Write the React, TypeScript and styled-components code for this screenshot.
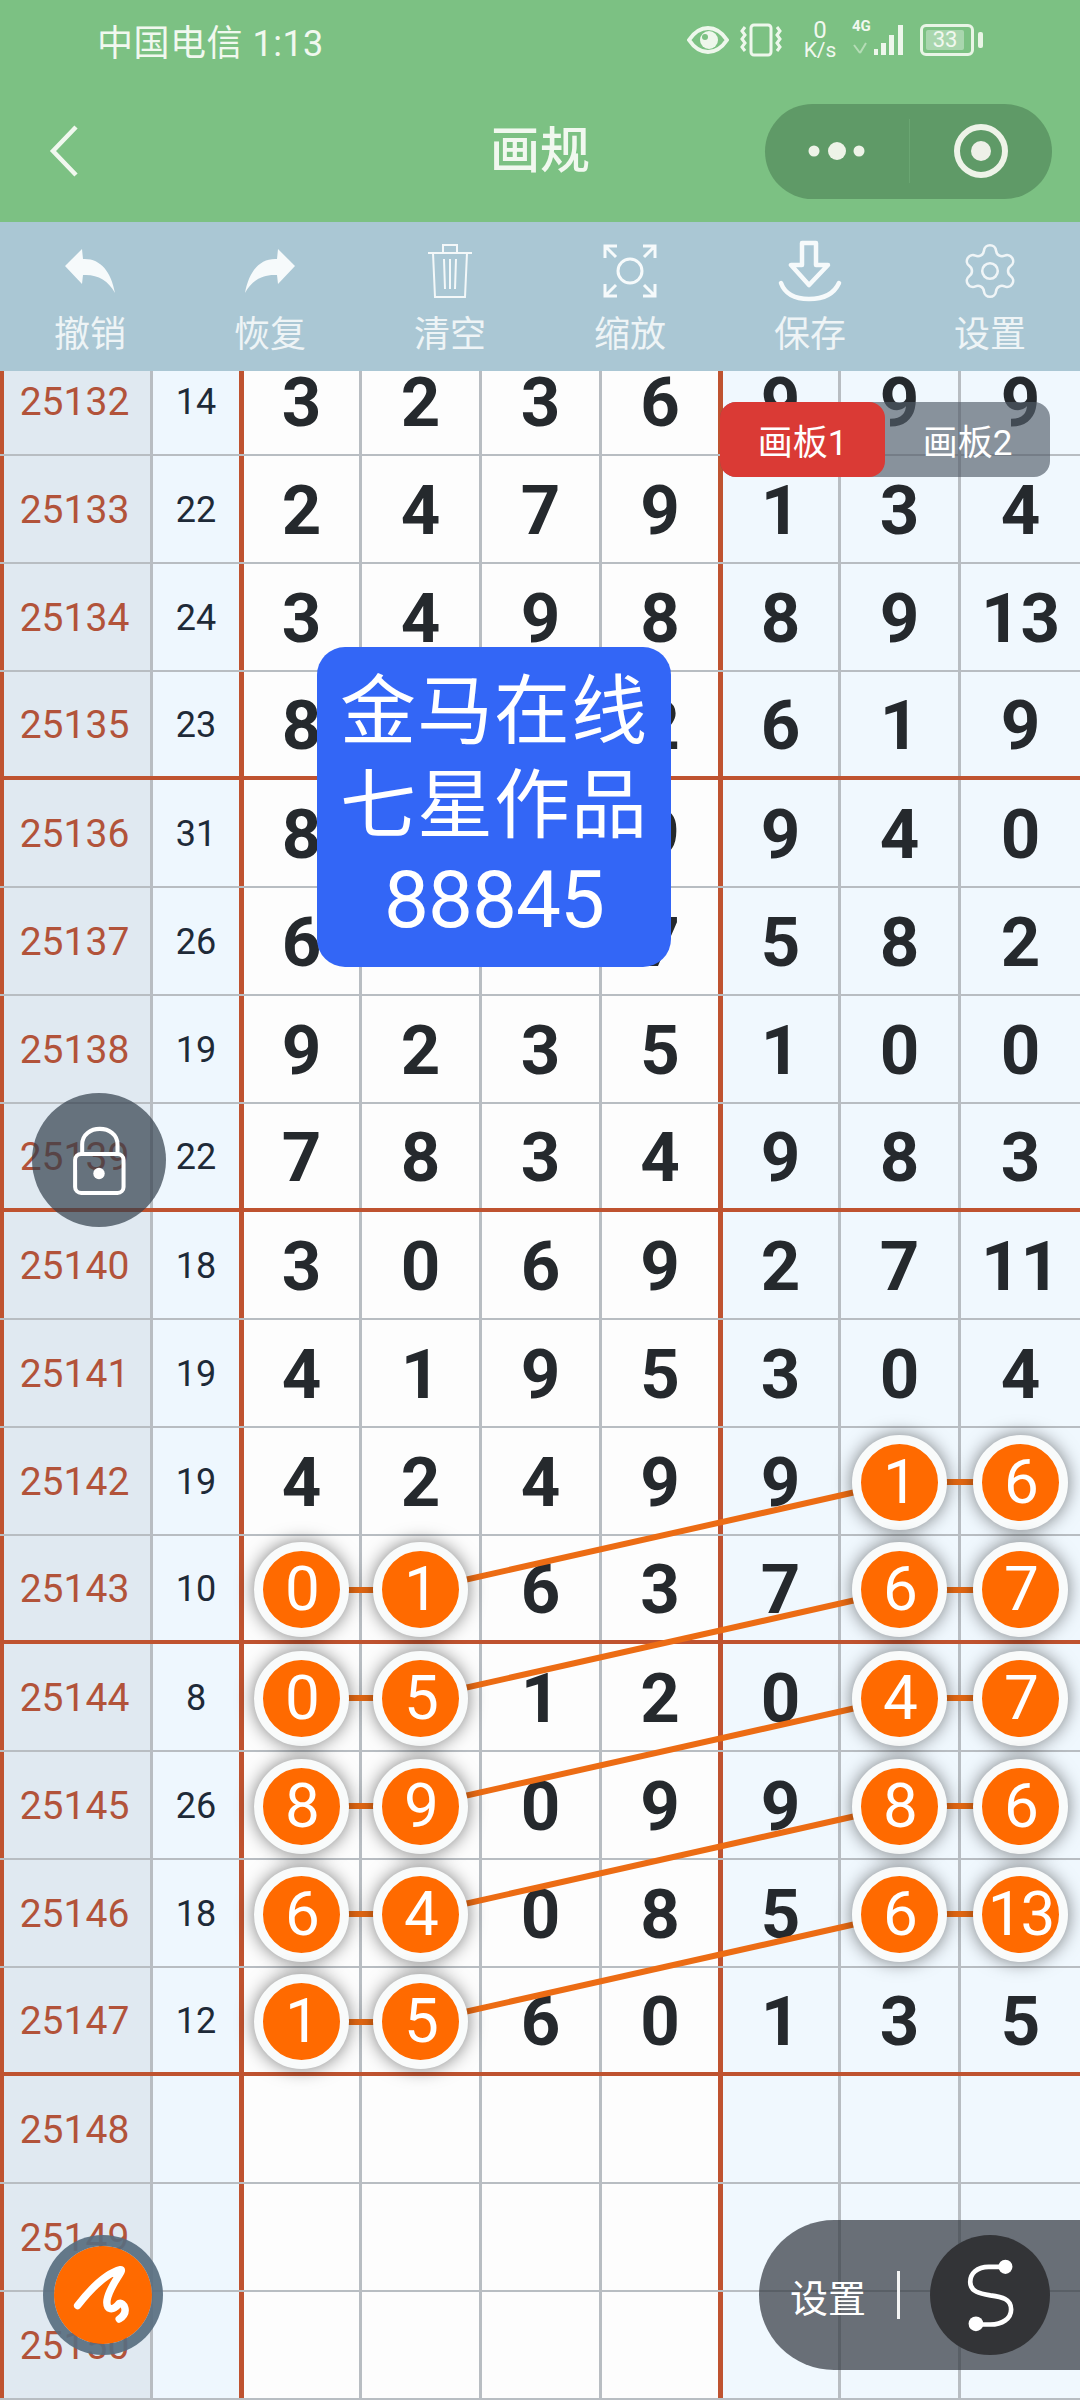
import styled, { createGlobalStyle } from "styled-components";
import { Settings } from "lucide-react";

const FONT = `Roboto, "Noto Sans CJK SC", sans-serif`;
const RED = "#bf5330";
const GRID = "#b8bdc2";
const ROW_H = 108;

type RowData = { id: number; sum?: number; nums: (number | null)[]; balls?: number[] };

const rows: RowData[] = [
  { id: 25132, sum: 14, nums: [3, 2, 3, 6, 9, 9, 9] },
  { id: 25133, sum: 22, nums: [2, 4, 7, 9, 1, 3, 4] },
  { id: 25134, sum: 24, nums: [3, 4, 9, 8, 8, 9, 13] },
  { id: 25135, sum: 23, nums: [8, 4, 9, 2, 6, 1, 9] },
  { id: 25136, sum: 31, nums: [8, 5, 9, 9, 9, 4, 0] },
  { id: 25137, sum: 26, nums: [6, 6, 7, 7, 5, 8, 2] },
  { id: 25138, sum: 19, nums: [9, 2, 3, 5, 1, 0, 0] },
  { id: 25139, sum: 22, nums: [7, 8, 3, 4, 9, 8, 3] },
  { id: 25140, sum: 18, nums: [3, 0, 6, 9, 2, 7, 11] },
  { id: 25141, sum: 19, nums: [4, 1, 9, 5, 3, 0, 4] },
  { id: 25142, sum: 19, nums: [4, 2, 4, 9, 9, 1, 6], balls: [5, 6] },
  { id: 25143, sum: 10, nums: [0, 1, 6, 3, 7, 6, 7], balls: [0, 1, 5, 6] },
  { id: 25144, sum: 8, nums: [0, 5, 1, 2, 0, 4, 7], balls: [0, 1, 5, 6] },
  { id: 25145, sum: 26, nums: [8, 9, 0, 9, 9, 8, 6], balls: [0, 1, 5, 6] },
  { id: 25146, sum: 18, nums: [6, 4, 0, 8, 5, 6, 13], balls: [0, 1, 5, 6] },
  { id: 25147, sum: 12, nums: [1, 5, 6, 0, 1, 3, 5], balls: [0, 1] },
  { id: 25148, nums: [null, null, null, null, null, null, null] },
  { id: 25149, nums: [null, null, null, null, null, null, null] },
  { id: 25150, nums: [null, null, null, null, null, null, null] },
];

const tools = ["撤销", "恢复", "清空", "缩放", "保存", "设置"];

const GlobalStyle = createGlobalStyle`
  html, body {
    margin: 0;
    padding: 0;
    background: #fff;
    font-family: ${FONT};
  }
  * {
    box-sizing: border-box;
  }
`;

const Page = styled.div`
  position: relative;
  width: 1080px;
  height: 2400px;
  overflow: hidden;
  display: flex;
  flex-direction: column;
`;

const Header = styled.header`
  height: 222px;
  flex: none;
  background: #7cc183;
  color: #f1f8ef;
`;

const StatusBar = styled.div`
  height: 80px;
  padding: 0 97px 0 97px;
  display: flex;
  align-items: center;
  justify-content: space-between;
`;

const Carrier = styled.span`
  font-size: 36px;
  letter-spacing: 0.5px;
`;

const StatusIcons = styled.div`
  display: flex;
  align-items: center;
`;

const Speed = styled.div`
  width: 38px;
  margin: 0 13px 0 17px;
  display: flex;
  flex-direction: column;
  align-items: center;
  font-size: 21px;
  line-height: 20px;
`;

const SpeedValue = styled.span`
  font-size: 24px;
`;

const Network = styled.div`
  position: relative;
  width: 56px;
  height: 34px;
  margin-right: 12px;
`;

const NetworkLabel = styled.span`
  position: absolute;
  left: 0;
  top: -6px;
  font-size: 15px;
  font-weight: 700;
  line-height: 18px;
`;

const Battery = styled.div`
  width: 54px;
  height: 32px;
  padding: 3px;
  border: 3px solid #e9f5e6;
  border-radius: 6px;
  display: flex;
`;

const BatteryLevel = styled.div`
  width: 38px;
  background: #a9d6ae;
  border-radius: 2px;
  font-size: 22px;
  line-height: 20px;
  text-align: center;
  color: #f1f8ef;
`;

const BatteryCap = styled.div`
  width: 5px;
  height: 16px;
  margin-left: 4px;
  background: #e9f5e6;
  border-radius: 2px;
`;

const NavBar = styled.div`
  height: 142px;
  padding: 0 28px;
  display: grid;
  grid-template-columns: 1fr auto 1fr;
  align-items: center;
`;

const BackSlot = styled.div`
  padding-left: 20px;
  display: flex;
`;

const Title = styled.h1`
  margin: 0;
  font-size: 50px;
  font-weight: 500;
  line-height: 60px;
`;

const Capsule = styled.div`
  justify-self: end;
  width: 287px;
  height: 95px;
  border-radius: 48px;
  background: #5f9a67;
  display: grid;
  grid-template-columns: 1fr 1fr;
  align-items: center;
`;

const CapsuleSlot = styled.div<{ $divided?: boolean }>`
  height: 64px;
  display: flex;
  align-items: center;
  justify-content: center;
  border-left: ${(p) => (p.$divided ? "1px solid #6aa672" : "none")};
`;

const Toolbar = styled.nav`
  height: 149px;
  flex: none;
  padding-top: 18px;
  background: #aac7d4;
  display: grid;
  grid-template-columns: repeat(6, 1fr);
`;

const Tool = styled.div`
  display: flex;
  flex-direction: column;
  align-items: center;
  color: #eef4f6;
`;

const ToolIcon = styled.div`
  height: 62px;
  display: flex;
  align-items: center;
  justify-content: center;
`;

const ToolLabel = styled.span`
  margin-top: 13px;
  font-size: 36px;
  line-height: 40px;
`;

const TableViewport = styled.main`
  flex: 1;
  overflow: hidden;
`;

const Table = styled.div`
  position: relative;
  margin-top: -23px;
`;

const Row = styled.div<{ $heavy: boolean }>`
  height: ${ROW_H}px;
  display: grid;
  grid-template-columns: 150px 89px 120px 120px 120px 119px 120px 120px 122px;
  border-bottom: ${(p) => (p.$heavy ? `4px solid ${RED}` : `2px solid ${GRID}`)};
`;

const PeriodCell = styled.div`
  padding: 2px 5px 0 0;
  border-left: 4px solid ${RED};
  background: #e0e9f1;
  color: #b2533a;
  font-size: 39px;
  line-height: 1;
  display: flex;
  align-items: center;
  justify-content: center;
`;

const SumCell = styled.div`
  padding-top: 2px;
  border-left: 3px solid ${GRID};
  background: #eef7fe;
  color: #1e2a38;
  font-size: 36px;
  display: flex;
  align-items: center;
  justify-content: center;
`;

const NumberCell = styled.div<{ $tinted: boolean; $heavy: boolean }>`
  padding-top: 2px;
  border-left: ${(p) => (p.$heavy ? `5px solid ${RED}` : `3px solid ${GRID}`)};
  background: ${(p) => (p.$tinted ? "#f0f8fe" : "#fdfdfd")};
  color: #25292d;
  font-size: 69px;
  font-weight: 700;
  line-height: 1;
  display: flex;
  align-items: center;
  justify-content: center;
`;

const Ball = styled.div`
  position: relative;
  z-index: 2;
  flex: none;
  width: 95px;
  height: 95px;
  border: 9px solid #f9fbfb;
  border-radius: 50%;
  background: #ff6a00;
  box-shadow: 0 0 18px rgba(0, 0, 0, 0.5);
  color: #fff;
  font-size: 62px;
  font-weight: 400;
  letter-spacing: -2px;
  display: flex;
  align-items: center;
  justify-content: center;
`;

const LinkLayer = styled.svg`
  position: absolute;
  left: 0;
  top: 0;
  z-index: 1;
  pointer-events: none;
`;

const Notice = styled.div`
  position: absolute;
  left: 317px;
  top: 647px;
  z-index: 3;
  width: 354px;
  height: 320px;
  padding-top: 18px;
  border-radius: 28px;
  background: #3366f6;
  color: #fff;
  text-align: center;
`;

const NoticeLine = styled.div<{ $size: number }>`
  height: 94px;
  font-size: ${(p) => p.$size}px;
  line-height: 94px;
  letter-spacing: ${(p) => (p.$size === 80 ? "-1px" : "1px")};
`;

const BoardTabs = styled.div`
  position: absolute;
  left: 720px;
  top: 402px;
  z-index: 3;
  width: 330px;
  height: 75px;
  border-radius: 16px;
  background: rgba(82, 92, 104, 0.66);
  display: grid;
  grid-template-columns: 1fr 1fr;
`;

const BoardTab = styled.div<{ $active?: boolean }>`
  border-radius: 16px;
  background: ${(p) => (p.$active ? "#da3a35" : "transparent")};
  color: #fff;
  font-size: 35px;
  display: flex;
  align-items: center;
  justify-content: center;
`;

const LockButton = styled.div`
  position: absolute;
  left: 32px;
  top: 1093px;
  z-index: 3;
  width: 134px;
  height: 134px;
  border-radius: 50%;
  background: rgba(50, 62, 76, 0.7);
  display: flex;
  align-items: center;
  justify-content: center;
`;

const BrushButton = styled.div`
  position: absolute;
  left: 43px;
  top: 2235px;
  z-index: 3;
  width: 120px;
  height: 120px;
  border: 11px solid rgba(88, 110, 128, 0.92);
  border-radius: 50%;
  background: #ff6a00;
  background-clip: padding-box;
  display: flex;
  align-items: center;
  justify-content: center;
`;

const SettingsPill = styled.div`
  position: absolute;
  right: 0;
  top: 2220px;
  z-index: 3;
  width: 321px;
  height: 150px;
  padding-left: 31px;
  border-radius: 75px 0 0 75px;
  background: rgba(52, 58, 66, 0.72);
  color: #fff;
  display: flex;
  align-items: center;
`;

const PillLabel = styled.span`
  font-size: 38px;
`;

const PillDivider = styled.div`
  width: 3px;
  height: 48px;
  margin: 0 30px 0 31px;
  background: #f4f4f4;
`;

const PillBadge = styled.div`
  width: 120px;
  height: 120px;
  border-radius: 50%;
  background: #333437;
  display: flex;
  align-items: center;
  justify-content: center;
`;

const EyeIcon = () => (
  <svg width="42" height="30" viewBox="0 0 42 30">
    <path d="M2 15C8 6 14 3 21 3s13 3 19 12c-6 9-12 12-19 12S8 24 2 15Z" fill="none" stroke="#eef7ec" strokeWidth="4" />
    <circle cx="22" cy="15" r="9" fill="#eef7ec" />
    <circle cx="18" cy="12" r="3" fill="#7cc183" />
  </svg>
);

const VibrateIcon = () => (
  <svg width="46" height="34" viewBox="0 0 46 34" style={{ marginLeft: 9 }} fill="none" stroke="#eef7ec" strokeWidth="3">
    <rect x="13" y="2" width="20" height="30" rx="3" />
    <path d="M7 4 4 8l3 4-3 4 3 4-3 4 3 4M39 4l3 4-3 4 3 4-3 4 3 4-3 4" />
  </svg>
);

const SignalIcon = () => (
  <svg width="56" height="34" viewBox="0 0 56 34" fill="#eef7ec">
    <rect x="22" y="26" width="4" height="6" />
    <rect x="29" y="20" width="5" height="12" />
    <rect x="37" y="12" width="5" height="20" />
    <rect x="46" y="2" width="5" height="30" />
    <path d="M2 22l6 8M14 20l-6 10" stroke="#b5dcb6" strokeWidth="2" />
  </svg>
);

const BackIcon = () => (
  <svg width="32" height="54" viewBox="0 0 32 54" fill="none" stroke="#f1f8ef" strokeWidth="4.5">
    <path d="M28 3 5 27l23 24" />
  </svg>
);

const MoreIcon = () => (
  <svg width="70" height="24" viewBox="0 0 70 24" fill="#eef3e8">
    <circle cx="12" cy="12" r="5.5" />
    <circle cx="35" cy="12" r="9" />
    <circle cx="57" cy="12" r="5.5" />
  </svg>
);

const TargetIcon = () => (
  <svg width="56" height="56" viewBox="0 0 56 56">
    <circle cx="28" cy="28" r="24" fill="none" stroke="#eef3e8" strokeWidth="6" />
    <circle cx="28" cy="28" r="10" fill="#eef0e8" />
  </svg>
);

const UndoIcon = ({ flip }: { flip?: boolean }) => (
  <svg width="52" height="46" viewBox="0 0 52 46" fill="#f6fafb" style={flip ? { transform: "scaleX(-1)" } : undefined}>
    <path d="M1 18 18 1l1 10c17-1 28 12 32 34-7-13-18-19-32-18l-1 9Z" />
  </svg>
);

const TrashIcon = () => (
  <svg width="46" height="56" viewBox="0 0 46 56" fill="none" stroke="#f4f8f9" strokeWidth="2">
    <path d="M1 10h44M16 10V2h14v8M6 10l2 44h30l2-44M17 16l1 30M23 16v30M29 16l-1 30" />
  </svg>
);

const ExpandIcon = () => (
  <svg width="54" height="54" viewBox="0 0 54 54" fill="none" stroke="#f6fafb" strokeWidth="3">
    <circle cx="27" cy="27" r="12" />
    <path d="M2 14V2h12M2 2l11 11M52 14V2H40M52 2 41 13M2 40v12h12M2 52l11-11M52 40v12H40M52 52 41 41" />
  </svg>
);

const SaveIcon = () => (
  <svg width="64" height="62" viewBox="0 0 64 62" fill="none" stroke="#f6fafb" strokeWidth="4.5" strokeLinejoin="round">
    <path d="M24 3h14v22h12L31 45 13 25h11Z" />
    <path d="M3 43c4 11 14 16 28 16s25-5 30-16" strokeLinecap="round" />
  </svg>
);

const LockIcon = () => (
  <svg width="64" height="74" viewBox="200 220 190 220" fill="none" stroke="#fff" strokeWidth="12">
    <path d="M245 312v-28c0-62 105-62 105 0v28" />
    <rect x="224" y="312" width="144" height="116" rx="18" />
    <circle cx="295" cy="370" r="17" fill="#fff" stroke="none" />
  </svg>
);

const BrushIcon = () => (
  <svg width="98" height="98" viewBox="75 80 290 290" fill="none" stroke="#fff" strokeWidth="22" strokeLinecap="round" strokeLinejoin="round">
    <path d="M145 256C185 205 230 160 272 150C285 150 240 195 232 240C228 272 250 272 268 250C280 245 300 275 268 296" />
  </svg>
);

const ShareIcon = () => (
  <svg width="120" height="120" viewBox="540 75 358 358" fill="none" stroke="#fff" strokeWidth="14">
    <path d="M765 170H715C680 170 660 190 660 215C660 245 690 250 720 255C755 260 782 265 782 297C782 325 755 342 720 342H677" />
    <circle cx="765" cy="170" r="21" fill="#fff" stroke="none" />
    <circle cx="677" cy="340" r="22" fill="#fff" stroke="none" />
  </svg>
);

const toolIcons = [
  <UndoIcon key="undo" />,
  <UndoIcon key="redo" flip />,
  <TrashIcon key="trash" />,
  <ExpandIcon key="zoom" />,
  <SaveIcon key="save" />,
  <Settings key="gear" size={62} color="#f0f5f7" strokeWidth={1} />,
];

const rowY = (i: number) => (i + 0.5) * ROW_H;

const LinkLines = () => {
  const first = rows.findIndex((r) => r.id === 25143);
  const last = rows.findIndex((r) => r.id === 25147);
  const segments: { x1: number; y1: number; x2: number; y2: number }[] = [];
  for (let i = first; i <= last; i++) {
    segments.push({ x1: 420, y1: rowY(i), x2: 900, y2: rowY(i - 1) });
    segments.push({ x1: 301, y1: rowY(i), x2: 420, y2: rowY(i) });
    segments.push({ x1: 900, y1: rowY(i - 1), x2: 1020, y2: rowY(i - 1) });
  }
  return (
    <LinkLayer width="1080" height={rows.length * ROW_H}>
      {segments.map((s, i) => (
        <line key={i} {...s} stroke="#ec6c14" strokeWidth="6" />
      ))}
    </LinkLayer>
  );
};

const App = () => {
  return (
    <Page>
      <GlobalStyle />
      <Header>
        <StatusBar>
          <Carrier>中国电信 1:13</Carrier>
          <StatusIcons>
            <EyeIcon />
            <VibrateIcon />
            <Speed>
              <SpeedValue>0</SpeedValue>
              <span>K/s</span>
            </Speed>
            <Network>
              <NetworkLabel>4G</NetworkLabel>
              <SignalIcon />
            </Network>
            <Battery>
              <BatteryLevel>33</BatteryLevel>
            </Battery>
            <BatteryCap />
          </StatusIcons>
        </StatusBar>
        <NavBar>
          <BackSlot>
            <BackIcon />
          </BackSlot>
          <Title>画规</Title>
          <Capsule>
            <CapsuleSlot>
              <MoreIcon />
            </CapsuleSlot>
            <CapsuleSlot $divided>
              <TargetIcon />
            </CapsuleSlot>
          </Capsule>
        </NavBar>
      </Header>

      <Toolbar>
        {tools.map((label, i) => (
          <Tool key={label}>
            <ToolIcon>{toolIcons[i]}</ToolIcon>
            <ToolLabel>{label}</ToolLabel>
          </Tool>
        ))}
      </Toolbar>

      <TableViewport>
        <Table>
          {rows.map((row, i) => (
            <Row key={row.id} $heavy={i % 4 === 3}>
              <PeriodCell>{row.id}</PeriodCell>
              <SumCell>{row.sum}</SumCell>
              {row.nums.map((n, col) => (
                <NumberCell key={col} $tinted={col > 3} $heavy={col === 0 || col === 4}>
                  {row.balls?.includes(col) ? <Ball>{n}</Ball> : n}
                </NumberCell>
              ))}
            </Row>
          ))}
          <LinkLines />
        </Table>
      </TableViewport>

      <Notice>
        <NoticeLine $size={76}>金马在线</NoticeLine>
        <NoticeLine $size={76}>七星作品</NoticeLine>
        <NoticeLine $size={80}>88845</NoticeLine>
      </Notice>

      <BoardTabs>
        <BoardTab $active>画板1</BoardTab>
        <BoardTab>画板2</BoardTab>
      </BoardTabs>

      <LockButton>
        <LockIcon />
      </LockButton>

      <BrushButton>
        <BrushIcon />
      </BrushButton>

      <SettingsPill>
        <PillLabel>设置</PillLabel>
        <PillDivider />
        <PillBadge>
          <ShareIcon />
        </PillBadge>
      </SettingsPill>
    </Page>
  );
};

export default App;
